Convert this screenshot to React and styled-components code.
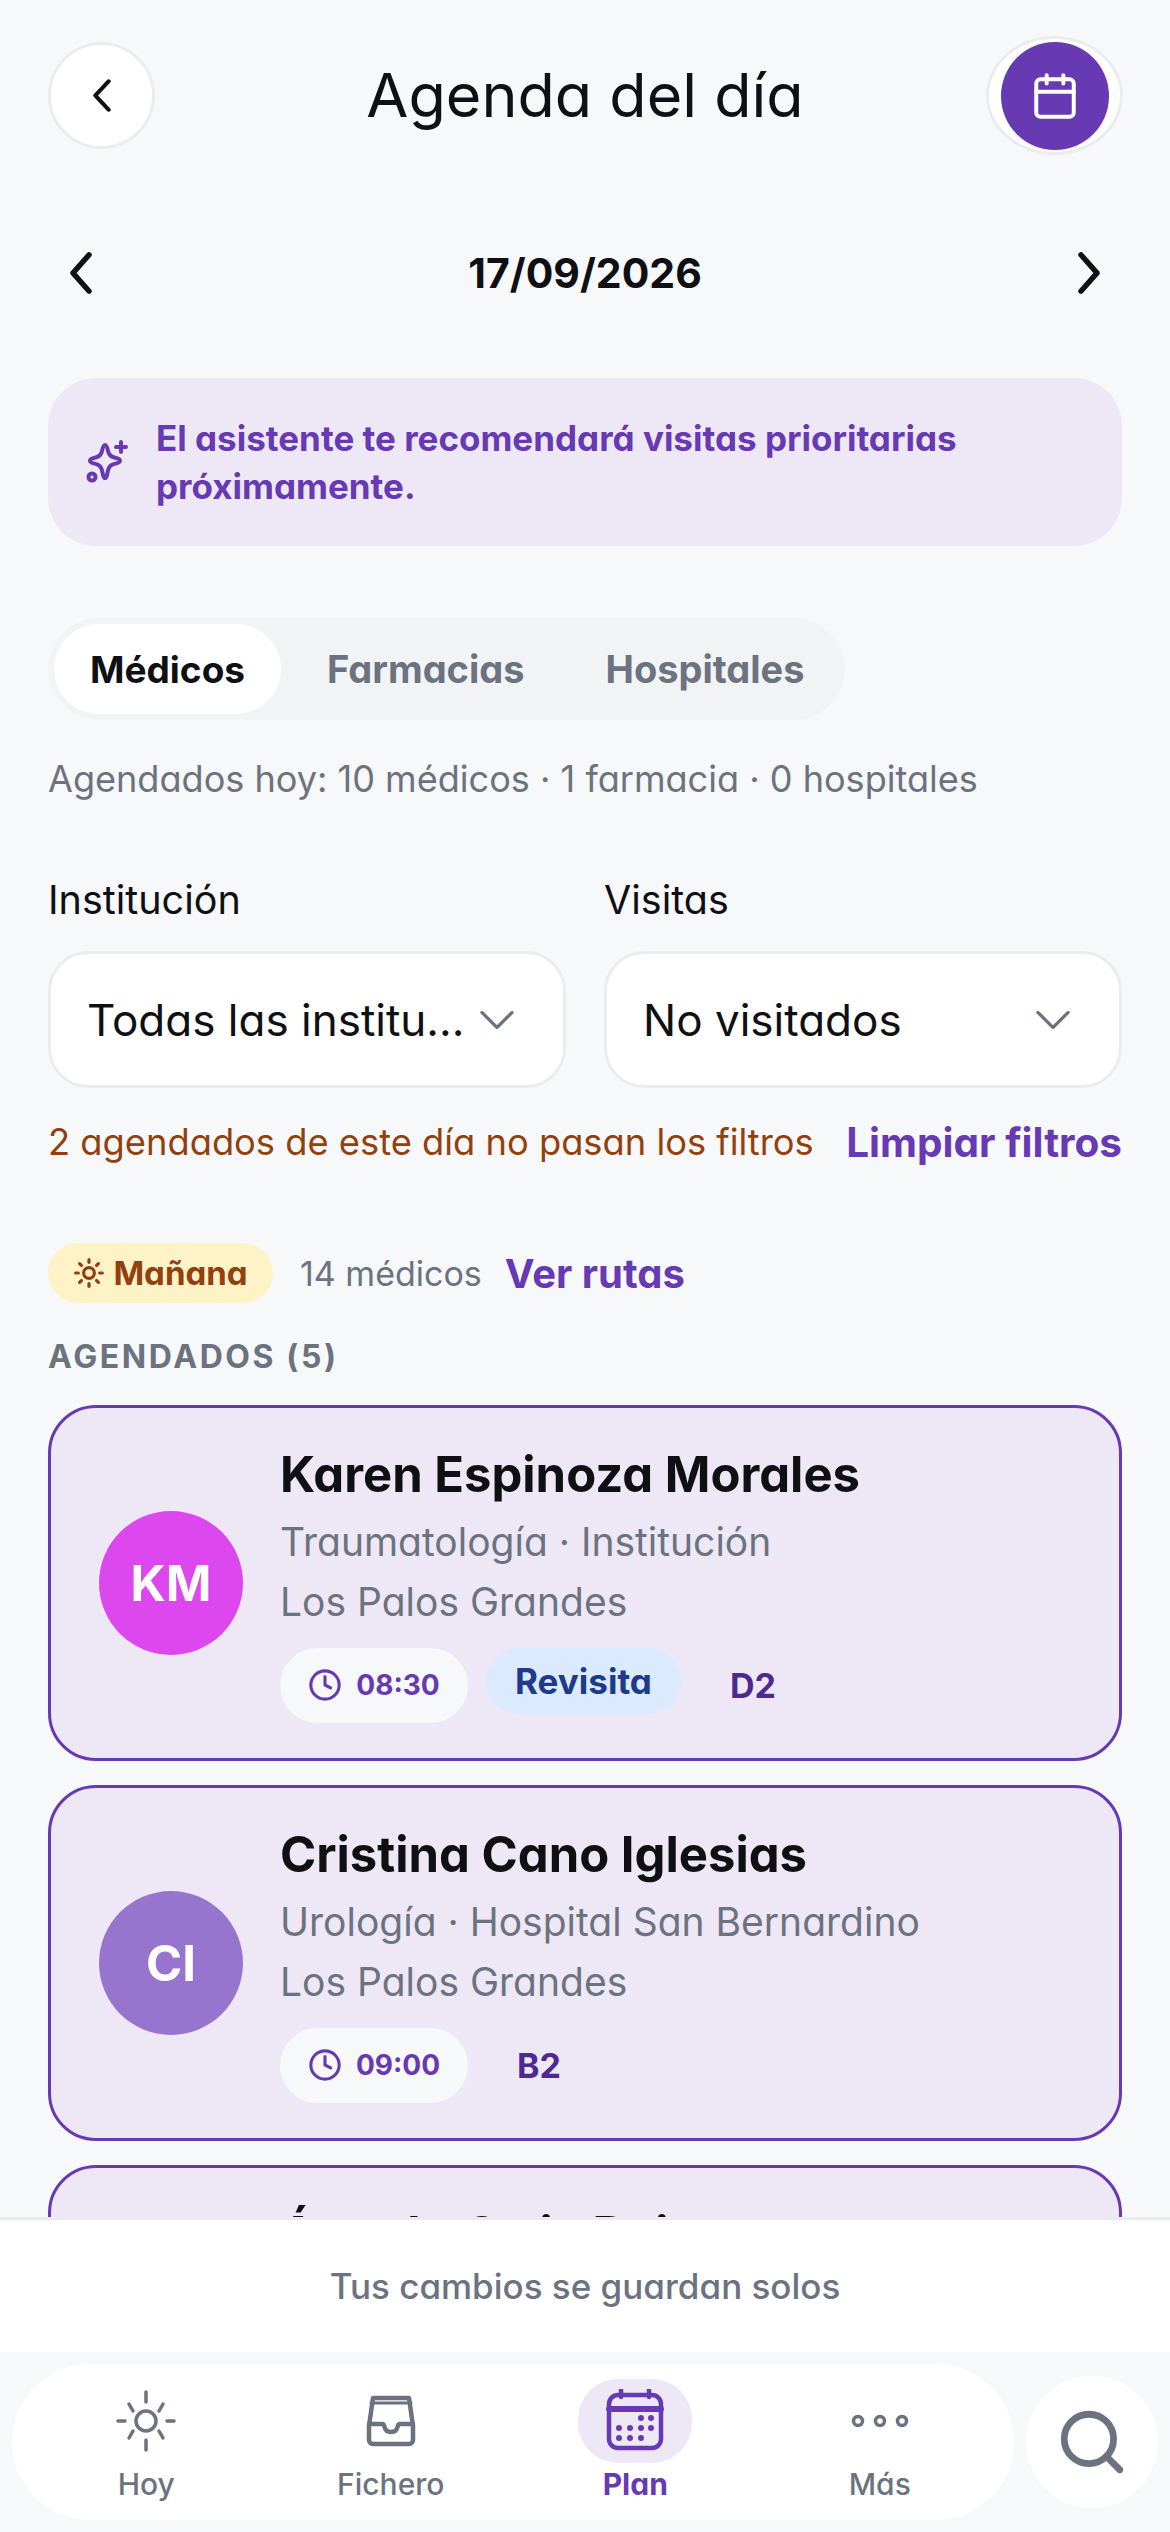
import React from 'react'
import styled, { createGlobalStyle } from 'styled-components'
import { Calendar, Clock, Sun, Search } from 'lucide-react'

const PURPLE = '#673ab3'
const LILAC = '#eee8f6'
const GRAY = '#6b7280'
const INK = '#0f1014'

const GlobalStyle = createGlobalStyle`
  html, body { margin: 0; padding: 0; }
  body {
    background: #f7f8fa;
    font-family: Inter, "Noto Sans", sans-serif;
    font-feature-settings: "cv11";
    color: ${INK};
  }
  * { box-sizing: border-box; }
`

const Screen = styled.div`
  width: 1170px;
  height: 2532px;
  display: flex;
  flex-direction: column;
  overflow: hidden;
`

const Scroll = styled.main`
  flex: 1;
  min-height: 0;
  overflow: hidden;
  padding: 36px 48px 0;
`

const Header = styled.header`
  display: grid;
  grid-template-columns: 1fr auto 1fr;
  align-items: center;
  height: 119px;
`

const BackButton = styled.button`
  width: 107px;
  height: 107px;
  margin: 0;
  padding: 0;
  border: 3px solid #ececee;
  border-radius: 50%;
  background: #fff;
  color: ${INK};
  display: flex;
  align-items: center;
  justify-content: center;
`

const CalendarButton = styled.button`
  justify-self: end;
  width: 137px;
  height: 119px;
  margin: 0 -1px 0 0;
  padding: 0;
  border: 3px solid #ececee;
  border-radius: 50%;
  background: #fff;
  display: flex;
  align-items: center;
  justify-content: center;
`

const CalendarDisc = styled.span`
  width: 108px;
  height: 108px;
  border-radius: 50%;
  background: ${PURPLE};
  color: #fff;
  display: flex;
  align-items: center;
  justify-content: center;
`

const Title = styled.h1`
  margin: 0;
  font-size: 61px;
  font-weight: 400;
  line-height: 119px;
`

const DateRow = styled.div`
  display: flex;
  align-items: center;
  justify-content: space-between;
  margin-top: 82px;
  padding: 0 21px;
  height: 72px;
  color: ${INK};
`

const DateText = styled.div`
  font-size: 41px;
  font-weight: 700;
`

const Banner = styled.div`
  display: flex;
  align-items: center;
  gap: 24px;
  margin-top: 69px;
  height: 168px;
  padding: 0 36px;
  border-radius: 48px;
  background: ${LILAC};
  color: ${PURPLE};
  font-size: 35px;
  font-weight: 700;
  line-height: 48px;
`

const Tabs = styled.div`
  display: inline-flex;
  align-items: center;
  margin-top: 72px;
  height: 102px;
  padding: 0 6px;
  border-radius: 51px;
  background: #f2f3f5;
`

const Tab = styled.div`
  height: 90px;
  padding: 0 ${(p) => p.$pad}px;
  border-radius: 45px;
  display: flex;
  align-items: center;
  font-size: ${(p) => p.$size}px;
  font-weight: 700;
  background: ${(p) => (p.$active ? '#fff' : 'transparent')};
  color: ${(p) => (p.$active ? INK : GRAY)};
`

const Scheduled = styled.p`
  margin: 36px 0 0;
  font-size: 36.1px;
  line-height: 46px;
  color: ${GRAY};
`

const Filters = styled.div`
  display: grid;
  grid-template-columns: 518px 518px;
  gap: 38px;
  margin-top: 74px;
`

const Field = styled.div`
  display: flex;
  flex-direction: column;
`

const FieldLabel = styled.label`
  font-size: 39.5px;
  line-height: 48px;
  margin-bottom: 27px;
`

const Select = styled.div`
  height: 137px;
  border: 3px solid #ececee;
  border-radius: 40px;
  background: #fff;
  padding: 0 48px 0 36px;
  display: flex;
  align-items: center;
  justify-content: space-between;
  font-size: 44px;
  color: ${GRAY};
`

const SelectValue = styled.span`
  color: ${INK};
  white-space: nowrap;
`

const FilterNote = styled.div`
  display: flex;
  align-items: center;
  justify-content: space-between;
  margin-top: 30px;
  height: 48px;
`

const NoteText = styled.span`
  font-size: 36.3px;
  color: #92400e;
`

const LinkText = styled.span`
  font-size: ${(p) => p.$size}px;
  font-weight: 700;
  color: ${PURPLE};
`

const ShiftRow = styled.div`
  display: flex;
  align-items: center;
  margin-top: 77px;
  height: 60px;
`

const ShiftPill = styled.div`
  width: 225px;
  height: 60px;
  border-radius: 30px;
  background: #fef3c7;
  color: #92400e;
  display: flex;
  align-items: center;
  justify-content: center;
  gap: 8px;
  font-size: 33px;
  font-weight: 700;
`

const ShiftCount = styled.span`
  margin: 0 23px 0 27px;
  font-size: 34px;
  color: ${GRAY};
`

const SectionTitle = styled.h2`
  margin: 32px 0 0;
  font-size: 32px;
  line-height: 44px;
  font-weight: 700;
  letter-spacing: 2.6px;
  color: ${GRAY};
`

const CardList = styled.div`
  display: flex;
  flex-direction: column;
  gap: 24px;
  margin-top: 26px;
`

const Card = styled.article`
  height: 356px;
  flex: none;
  border: 3px solid ${PURPLE};
  border-radius: 48px;
  background: ${LILAC};
  padding: 0 48px;
  display: flex;
  align-items: center;
  gap: 37px;
`

const Avatar = styled.div`
  width: 144px;
  height: 144px;
  flex: none;
  border-radius: 50%;
  background: ${(p) => p.$color};
  color: #fff;
  font-size: 49px;
  font-weight: 700;
  display: flex;
  align-items: center;
  justify-content: center;
`

const CardBody = styled.div`
  display: flex;
  flex-direction: column;
`

const DoctorName = styled.h3`
  margin: 0 0 6px;
  font-size: 49px;
  line-height: 62px;
  font-weight: 700;
`

const DoctorLine = styled.div`
  font-size: 39px;
  line-height: 60px;
  color: ${GRAY};
`

const Chips = styled.div`
  display: flex;
  align-items: flex-start;
  gap: 18px;
  margin-top: 16px;
`

const TimeChip = styled.div`
  width: 188px;
  height: 75px;
  border-radius: 38px;
  background: #f7f8fa;
  color: ${PURPLE};
  display: flex;
  align-items: center;
  justify-content: center;
  gap: 14px;
  font-size: 28px;
  font-weight: 700;
`

const VisitChip = styled.div`
  width: 195px;
  height: 66px;
  border-radius: 33px;
  background: #dbeafe;
  color: #1e3a8a;
  display: flex;
  align-items: center;
  justify-content: center;
  font-size: 35px;
  font-weight: 700;
`

const Grade = styled.div`
  margin-left: 31px;
  height: 75px;
  display: flex;
  align-items: center;
  font-size: 34px;
  font-weight: 700;
  color: #4c2a92;
`

const SaveBar = styled.div`
  flex: none;
  height: 135px;
  border-top: 3px solid #ececee;
  background: #fff;
  display: flex;
  align-items: center;
  justify-content: center;
  font-size: 35px;
  font-weight: 500;
  color: ${GRAY};
`

const BottomArea = styled.nav`
  flex: none;
  height: 180px;
  padding: 12px 12px 0;
  display: flex;
  align-items: flex-start;
  gap: 12px;
`

const NavBar = styled.div`
  width: 1002px;
  height: 156px;
  padding: 0 12px;
  border-radius: 78px;
  background: #fff;
  display: grid;
  grid-template-columns: repeat(4, 1fr);
`

const NavItem = styled.div`
  display: flex;
  flex-direction: column;
  align-items: center;
  padding-top: 15px;
  font-size: 30px;
  font-weight: ${(p) => (p.$active ? 700 : 500)};
  color: ${(p) => (p.$active ? PURPLE : GRAY)};
`

const NavIcon = styled.div`
  width: 114px;
  height: 84px;
  border-radius: 40px;
  background: ${(p) => (p.$active ? LILAC : 'transparent')};
  display: flex;
  align-items: center;
  justify-content: center;
`

const NavLabel = styled.span`
  line-height: 42px;
`

const SearchButton = styled.div`
  width: 132px;
  height: 132px;
  margin-top: 12px;
  border-radius: 50%;
  background: #fff;
  color: ${GRAY};
  display: flex;
  align-items: center;
  justify-content: center;
`

const chevronPaths = {
  left: 'M20 3 4 22l16 19',
  right: 'M4 3l16 19L4 41',
  down: 'M3 4l15 17L33 4',
}

const Chevron = ({ dir, width, height, weight = 4.5 }) => (
  <svg width={width} height={height} viewBox={dir === 'down' ? '0 0 36 25' : '0 0 24 44'} fill="none" stroke="currentColor" strokeWidth={weight} strokeLinecap="round" strokeLinejoin="round" preserveAspectRatio="none">
    <path d={chevronPaths[dir]} />
  </svg>
)

const SparkleIcon = () => (
  <svg width="48" height="48" viewBox="0 0 48 48" fill="none" stroke="currentColor" strokeWidth="4" strokeLinecap="round" strokeLinejoin="round">
    <path d="M21 7c1.600 0 2.200 2 3 6 .8 4 2.600 5.600 6.500 6.500 3.500.8 5.500 1.500 5.500 3.200s-2 2.400-5.500 3.200c-3.900.9-5.700 2.500-6.500 6.500-.8 4-1.400 7.600-3 7.600s-2.200-3.600-3-7.600c-.8-4-2.600-5.600-6.500-6.500C8 25.100 6 24.400 6 22.700s2-2.400 5.500-3.200c3.900-.9 5.700-2.500 6.500-6.500.8-4 1.400-6 3-6Z" />
    <path d="M37 4v10M32 9h10" />
    <circle cx="8" cy="39" r="3.500" />
  </svg>
)

const SunIcon = () => (
  <svg width="60" height="62" viewBox="0 0 60 62" fill="none" stroke={GRAY} strokeWidth="3.500" strokeLinecap="round">
    <circle cx="30" cy="31" r="10" />
    <path d="M30 2v10M30 50v10M2 31h7M51 31h7M13 14l4 7M47 14l-4 7M13 48l4-7M47 48l-4-7" />
  </svg>
)

const TrayIcon = () => (
  <svg width="60" height="60" viewBox="0 0 60 60" fill="none" stroke={GRAY} strokeWidth="4.500" strokeLinejoin="round" strokeLinecap="round">
    <path d="M12 7h36l4 28v14a4 4 0 0 1-4 4H12a4 4 0 0 1-4-4V35L12 7Z" />
    <path d="M10 12h40" strokeWidth="3" />
    <path d="M8 33h13c2 0 2 1 2.500 3 .7 3 3 5 6.500 5s5.800-2 6.500-5c.5-2 .5-3 2.500-3h13" />
  </svg>
)

const PlanIcon = () => (
  <svg width="64" height="64" viewBox="0 0 64 64" fill="none" stroke={PURPLE} strokeWidth="4.500" strokeLinecap="round">
    <rect x="6" y="6" width="52" height="53" rx="9" />
    <path d="M6 20h52" strokeWidth="6" />
    <path d="M18 1v7M46 1v7" />
    <g fill={PURPLE} stroke="none">
      {[[38, 29], [48, 29], [16, 39], [27, 39], [38, 39], [48, 39], [16, 49], [27, 49], [38, 49]].map(([cx, cy]) => (
        <circle key={`${cx}-${cy}`} cx={cx} cy={cy} r="3" />
      ))}
    </g>
  </svg>
)

const DotsIcon = () => (
  <svg width="60" height="20" viewBox="0 0 60 20" fill="none" stroke={GRAY} strokeWidth="3.500">
    <circle cx="8" cy="10" r="4.500" />
    <circle cx="30" cy="10" r="4.500" />
    <circle cx="52" cy="10" r="4.500" />
  </svg>
)

const doctors = [
  { initials: 'KM', color: '#dd47ee', name: 'Karen Espinoza Morales', line: 'Traumatología · Institución', time: '08:30', visit: 'Revisita', grade: 'D2' },
  { initials: 'CI', color: '#9775cf', name: 'Cristina Cano Iglesias', line: 'Urología · Hospital San Bernardino', time: '09:00', grade: 'B2' },
  { initials: 'ÁR', color: '#3b82f6', name: 'Ángela Ortiz Ruiz', line: 'Cardiología · Institución', time: '09:30', grade: 'A1' },
]

export default function App() {
  return (
    <Screen>
      <GlobalStyle />
      <Scroll>
        <Header>
          <BackButton><Chevron dir="left" width={20} height={33} weight={5} /></BackButton>
          <Title>Agenda del día</Title>
          <CalendarButton>
            <CalendarDisc><Calendar size={50} strokeWidth={1.9} /></CalendarDisc>
          </CalendarButton>
        </Header>

        <DateRow>
          <Chevron dir="left" width={24} height={42} weight={5.5} />
          <DateText>17/09/2026</DateText>
          <Chevron dir="right" width={24} height={42} weight={5.5} />
        </DateRow>

        <Banner>
          <SparkleIcon />
          <div>El asistente te recomendará visitas prioritarias<br />próximamente.</div>
        </Banner>

        <Tabs>
          <Tab $active $pad={36} $size={37}>Médicos</Tab>
          <Tab $pad={46} $size={38}>Farmacias</Tab>
          <Tab $pad={35} $size={38}>Hospitales</Tab>
        </Tabs>

        <Scheduled>Agendados hoy: 10 médicos · 1 farmacia · 0 hospitales</Scheduled>

        <Filters>
          <Field>
            <FieldLabel>Institución</FieldLabel>
            <Select>
              <SelectValue>Todas las institu...</SelectValue>
              <Chevron dir="down" width={36} height={22} weight={3.5} />
            </Select>
          </Field>
          <Field>
            <FieldLabel>Visitas</FieldLabel>
            <Select>
              <SelectValue>No visitados</SelectValue>
              <Chevron dir="down" width={36} height={22} weight={3.5} />
            </Select>
          </Field>
        </Filters>

        <FilterNote>
          <NoteText>2 agendados de este día no pasan los filtros</NoteText>
          <LinkText $size={40.5}>Limpiar filtros</LinkText>
        </FilterNote>

        <ShiftRow>
          <ShiftPill><Sun size={32} strokeWidth={2.4} />Mañana</ShiftPill>
          <ShiftCount>14 médicos</ShiftCount>
          <LinkText $size={40}>Ver rutas</LinkText>
        </ShiftRow>

        <SectionTitle>AGENDADOS (5)</SectionTitle>

        <CardList>
          {doctors.map((d) => (
            <Card key={d.name}>
              <Avatar $color={d.color}>{d.initials}</Avatar>
              <CardBody>
                <DoctorName>{d.name}</DoctorName>
                <DoctorLine>{d.line}</DoctorLine>
                <DoctorLine>Los Palos Grandes</DoctorLine>
                <Chips>
                  <TimeChip><Clock size={34} strokeWidth={2.2} />{d.time}</TimeChip>
                  {d.visit && <VisitChip>{d.visit}</VisitChip>}
                  <Grade>{d.grade}</Grade>
                </Chips>
              </CardBody>
            </Card>
          ))}
        </CardList>
      </Scroll>

      <SaveBar>Tus cambios se guardan solos</SaveBar>

      <BottomArea>
        <NavBar>
          <NavItem>
            <NavIcon><SunIcon /></NavIcon>
            <NavLabel>Hoy</NavLabel>
          </NavItem>
          <NavItem>
            <NavIcon><TrayIcon /></NavIcon>
            <NavLabel>Fichero</NavLabel>
          </NavItem>
          <NavItem $active>
            <NavIcon $active><PlanIcon /></NavIcon>
            <NavLabel>Plan</NavLabel>
          </NavItem>
          <NavItem>
            <NavIcon><DotsIcon /></NavIcon>
            <NavLabel>Más</NavLabel>
          </NavItem>
        </NavBar>
        <SearchButton><Search size={74} strokeWidth={2.2} /></SearchButton>
      </BottomArea>
    </Screen>
  )
}
